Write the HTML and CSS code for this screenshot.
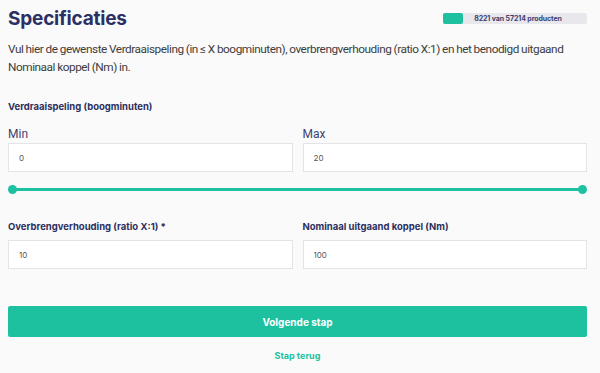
FILE: index.html
```html
<!DOCTYPE html>
<html lang="nl">
<head>
    <meta charset="UTF-8">
    <title>Specificaties</title>
    <link rel="stylesheet" href="styles.css">
</head>
<body>
    <div class="page">
        <div class="header">
            <h1>Specificaties</h1>
            <div class="counter">
                <div class="counter-fill"></div>
                <span>8221 van 57214 producten</span>
            </div>
        </div>
        <p class="intro">Vul hier de gewenste Verdraaispeling (in ≤ X boogminuten), overbrengverhouding (ratio X:1) en het benodigd uitgaand Nominaal koppel (Nm) in.</p>

        <div class="group-title">Verdraaispeling (boogminuten)</div>
        <div class="row">
            <div class="field">
                <label class="small-label">Min</label>
                <input class="box" type="text" value="0">
            </div>
            <div class="field">
                <label class="small-label">Max</label>
                <input class="box" type="text" value="20">
            </div>
        </div>
        <div class="slider">
            <div class="track"></div>
            <div class="thumb"></div>
            <div class="thumb"></div>
        </div>

        <div class="row row-second">
            <div class="field">
                <label class="group-title">Overbrengverhouding (ratio X:1) *</label>
                <input class="box" type="text" value="10">
            </div>
            <div class="field">
                <label class="group-title">Nominaal uitgaand koppel (Nm)</label>
                <input class="box" type="text" value="100">
            </div>
        </div>

        <button class="next">Volgende stap</button>
        <div class="back">Stap terug</div>
    </div>
</body>
</html>
```
FILE: styles.css
```css
*{
    padding: 0px;
    margin: 0px;
    box-sizing: border-box;
}
body{
    background: #fafafa;
    font-family: "Inter", "Roboto", sans-serif;
    color: #2c2f5e;
}
.page{
    padding: 6px 13px 0 8px;
}
.header{
    display: flex;
    justify-content: space-between;
    align-items: center;
    height: 24px;
}
h1{
    font-size: 19px;
    font-weight: 700;
    color: #2c2f63;
    letter-spacing: -0.2px;
}
.counter{
    position: relative;
    width: 144px;
    height: 11px;
    background: #e8e8ec;
    border-radius: 2px;
    display: flex;
    justify-content: center;
    align-items: center;
    margin-top: 1px;
}
.counter-fill{
    position: absolute;
    left: 0;
    top: 0;
    width: 20px;
    height: 11px;
    background: #1dc1a0;
    border-radius: 2px;
}
.counter span{
    font-size: 7px;
    font-weight: 700;
    color: #3c3f6e;
    letter-spacing: -0.1px;
    padding-left: 6px;
}
.intro{
    margin-top: 10px;
    font-family: "Roboto", sans-serif;
    font-size: 11.8px;
    line-height: 18px;
    color: #3d3d3d;
    letter-spacing: -0.45px;
    word-spacing: -0.3px;
}
.group-title{
    display: block;
    margin-top: 25px;
    font-size: 9.5px;
    font-weight: 700;
    color: #2c2f5e;
}
.row{
    display: flex;
    gap: 10px;
}
.field{
    flex: 1;
}
.small-label{
    display: block;
    margin-top: 15px;
    font-family: "Roboto", sans-serif;
    font-size: 12px;
    line-height: 14px;
    color: #3f4270;
}
.box{
    display: block;
    width: 100%;
    height: 29px;
    margin-top: 2px;
    border: 1px solid #e4e4e8;
    background: #fff;
    padding: 0 10px;
    font-family: inherit;
    font-size: 8px;
    color: #555;
    outline: none;
}
.slider{
    position: relative;
    height: 9px;
    margin-top: 13px;
    display: flex;
    justify-content: space-between;
    align-items: center;
}
.track{
    position: absolute;
    left: 4px;
    right: 4px;
    top: 3px;
    height: 3px;
    background: #1dc1a0;
}
.thumb{
    position: relative;
    width: 9px;
    height: 9px;
    border-radius: 50%;
    background: #1dc1a0;
}
.row-second .group-title{
    margin-top: 27px;
    margin-bottom: 8px;
}
.row-second .box{
    margin-top: 0;
}
.next{
    display: block;
    width: 100%;
    height: 31px;
    margin-top: 37px;
    border: none;
    border-radius: 2px;
    background: #1dc1a0;
    color: #fff;
    font-family: inherit;
    font-size: 10px;
    font-weight: 700;
}
.back{
    margin-top: 13px;
    text-align: center;
    font-size: 9px;
    font-weight: 700;
    color: #1dc1a0;
}
```
